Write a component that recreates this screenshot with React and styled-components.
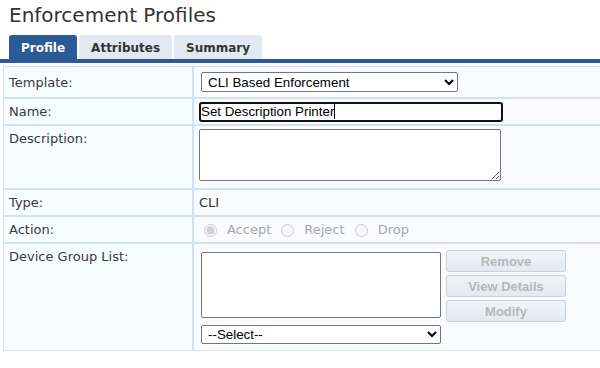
import styled, { createGlobalStyle } from "styled-components";

const Global = createGlobalStyle`
	html, body {
		margin: 0;
		padding: 0;
		background: #fff;
		overflow: hidden;
	}
	* {
		box-sizing: border-box;
	}
`;

const Page = styled.div`
	width: 600px;
	font-family: "DejaVu Sans", Verdana, sans-serif;
	color: #333;
`;

const Title = styled.h1`
	margin: 0;
	padding: 1px 0 0 9px;
	height: 35px;
	font-size: 20px;
	font-weight: 400;
	line-height: 28px;
	color: #333;
`;

const Tabs = styled.div`
	display: flex;
	gap: 2px;
	padding-left: 9px;
	height: 24px;
`;

const Tab = styled.div`
	display: flex;
	align-items: center;
	padding: 2px 12px 0;
	border-radius: 3px 3px 0 0;
	font-size: 12px;
	font-weight: 700;
	background: ${(p) => (p.$active ? "#2b5b97" : "#e2e9f3")};
	color: ${(p) => (p.$active ? "#fff" : "#333")};
`;

const Bar = styled.div`
	height: 4px;
	background: #2b5b97;
	margin-bottom: 3px;
`;

const Form = styled.div`
	display: flex;
	flex-direction: column;
	margin-left: 3px;
	width: 620px;
`;

const Row = styled.div`
	display: grid;
	grid-template-columns: 190px 1fr;
	grid-template-rows: ${(p) => p.$h}px;
	height: ${(p) => p.$h}px;
`;

const Label = styled.div`
	border: 1px solid #d3e0f4;
	background: #f6fdff;
	padding: ${(p) => (p.$top ? "5px 5px" : "0 5px")};
	display: flex;
	align-items: ${(p) => (p.$top ? "flex-start" : "center")};
	font-size: 13px;
	color: #3a3a3a;
`;

const Value = styled.div`
	border: 1px solid #d3e0f4;
	background: #fafbff;
	padding: ${(p) => p.$pad || "0 5px"};
	display: flex;
	align-items: ${(p) => (p.$top ? "flex-start" : "center")};
	font-size: 13px;
	color: #333;
	overflow: hidden;
`;

const Select = styled.select`
	width: ${(p) => p.$w}px;
	height: ${(p) => p.$h || 20}px;
	font-family: "Liberation Sans", Arial, sans-serif;
	font-size: 13.33px;
	color: #000;
	background: #fff;
	border: 1px solid #767676;
	border-radius: 2px;
	padding: 0 2px;
	margin: 0;
`;

const NameField = styled.div`
	width: 304px;
	height: 20px;
	border: 2px solid #111;
	border-radius: 3px;
	background: #fff;
	display: flex;
	align-items: center;
	font-family: "Liberation Sans", Arial, sans-serif;
	font-size: 13.33px;
	color: #000;
	white-space: nowrap;
`;

const Caret = styled.span`
	display: inline-block;
	width: 1px;
	height: 15px;
	background: #000;
`;

const TextArea = styled.textarea`
	width: 302px;
	height: 52px;
	margin: 0;
	border: 1px solid #767676;
	border-radius: 2px;
	background: #fff;
	font-family: "Liberation Sans", Arial, sans-serif;
	font-size: 13.33px;
`;

const Radios = styled.div`
	display: flex;
	align-items: center;
	color: #a8a8a8;
	font-size: 13px;
`;

const Radio = styled.input`
	width: 13px;
	height: 13px;
	margin: 1px 10px 0 ${(p) => p.$left}px;
`;

const Device = styled.div`
	display: flex;
	gap: 5px;
`;

const ListColumn = styled.div`
	display: flex;
	flex-direction: column;
	gap: 7px;
	padding-top: 2px;
`;

const ListBox = styled.div`
	width: 240px;
	height: 66px;
	border: 1px solid #767676;
	border-radius: 2px;
	background: #fff;
`;

const Buttons = styled.div`
	display: flex;
	flex-direction: column;
	gap: 3px;
`;

const Button = styled.button`
	width: 120px;
	height: 22px;
	padding: 0;
	border: 1px solid #c9d0da;
	border-radius: 3px;
	background: linear-gradient(#f1f4f9, #e3e9f2);
	font-family: "Liberation Sans", Arial, sans-serif;
	font-size: 13px;
	font-weight: 700;
	color: #b5b7ba;
`;

function App() {
	return (
		<Page>
			<Global />
			<Title>Enforcement Profiles</Title>
			<Tabs>
				<Tab $active>Profile</Tab>
				<Tab>Attributes</Tab>
				<Tab>Summary</Tab>
			</Tabs>
			<Bar />
			<Form>
				<Row $h={32}>
					<Label>Template:</Label>
					<Value $pad="0 7px">
						<Select $w={257} defaultValue="cli">
							<option value="cli">CLI Based Enforcement</option>
						</Select>
					</Value>
				</Row>
				<Row $h={27}>
					<Label>Name:</Label>
					<Value>
						<NameField>
							Set Description Printer
							<Caret />
						</NameField>
					</Value>
				</Row>
				<Row $h={64}>
					<Label $top>Description:</Label>
					<Value $top $pad="3px 5px">
						<TextArea />
					</Value>
				</Row>
				<Row $h={27}>
					<Label>Type:</Label>
					<Value>CLI</Value>
				</Row>
				<Row $h={27}>
					<Label>Action:</Label>
					<Value>
						<Radios>
							<Radio type="radio" name="action" disabled defaultChecked $left={5} />
							Accept
							<Radio type="radio" name="action" disabled $left={10} />
							Reject
							<Radio type="radio" name="action" disabled $left={10} />
							Drop
						</Radios>
					</Value>
				</Row>
				<Row $h={108}>
					<Label $top>Device Group List:</Label>
					<Value $top $pad="6px 7px 0">
						<Device>
							<ListColumn>
								<ListBox />
								<Select $w={240} $h={19} defaultValue="">
									<option value="">--Select--</option>
								</Select>
							</ListColumn>
							<Buttons>
								<Button disabled>Remove</Button>
								<Button disabled>View Details</Button>
								<Button disabled>Modify</Button>
							</Buttons>
						</Device>
					</Value>
				</Row>
			</Form>
		</Page>
	);
}

export default App;
